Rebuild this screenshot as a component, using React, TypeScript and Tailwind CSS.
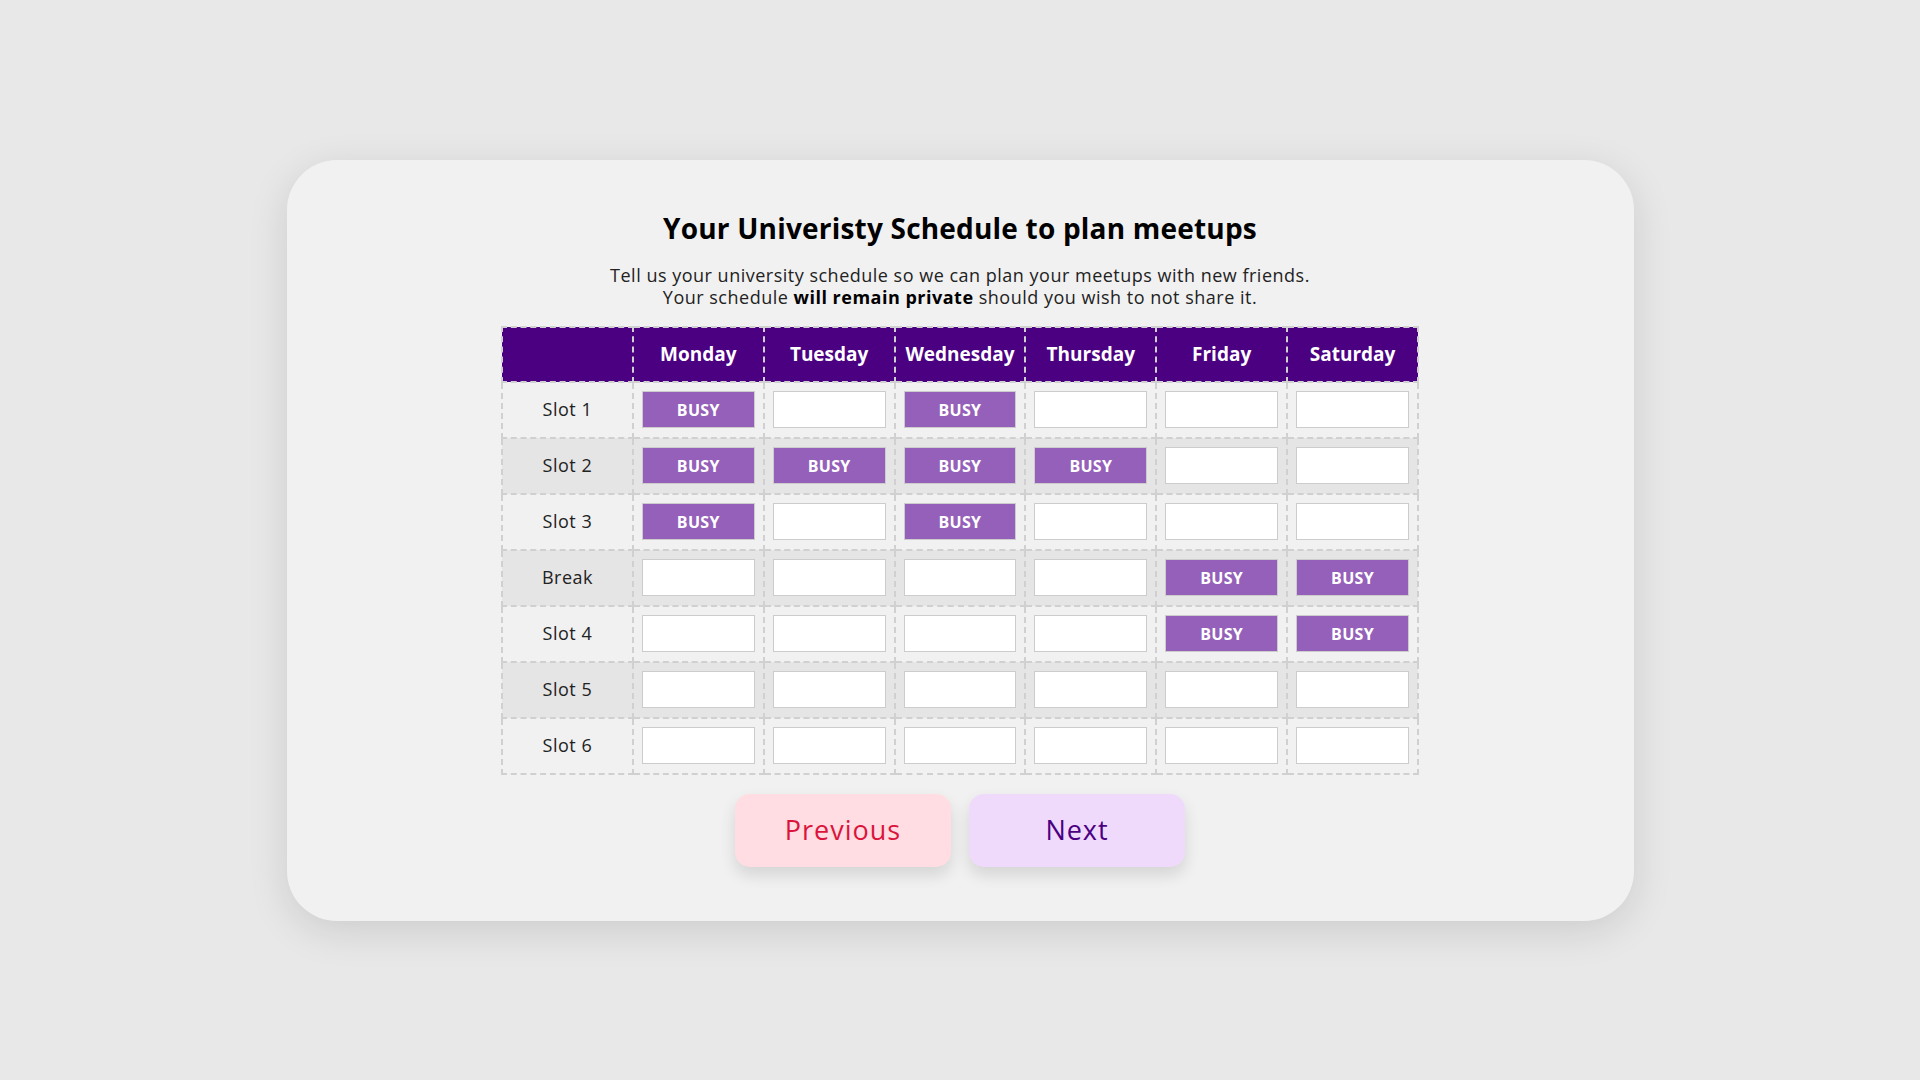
import React from 'react';

const days = ['Monday', 'Tuesday', 'Wednesday', 'Thursday', 'Friday', 'Saturday'];

const rows: { label: string; busy: boolean[] }[] = [
  { label: 'Slot 1', busy: [true, false, true, false, false, false] },
  { label: 'Slot 2', busy: [true, true, true, true, false, false] },
  { label: 'Slot 3', busy: [true, false, true, false, false, false] },
  { label: 'Break', busy: [false, false, false, false, true, true] },
  { label: 'Slot 4', busy: [false, false, false, false, true, true] },
  { label: 'Slot 5', busy: [false, false, false, false, false, false] },
  { label: 'Slot 6', busy: [false, false, false, false, false, false] },
];

function SlotBox({ busy }: { busy: boolean }) {
  return (
    <div
      className={`h-[37px] w-full border border-[#cccccc] flex items-center justify-center text-[16px] tracking-[0.3px] font-bold ${
        busy ? 'bg-[#9560b9] text-white' : 'bg-white'
      }`}
    >
      {busy ? 'BUSY' : ''}
    </div>
  );
}

export default function App() {
  return (
    <div className="min-h-screen w-full bg-[#e8e8e8] flex items-center justify-center font-['Open_Sans',sans-serif]">
      <div className="w-[1347px] rounded-[50px] bg-[#f1f1f1] shadow-[0_10px_40px_rgba(0,0,0,0.12)] pt-[51px] pb-[54px] flex flex-col items-center">
        <h1 className="text-[28px] leading-[34px] tracking-[0.2px] font-bold text-black">
          Your Univeristy Schedule to plan meetups
        </h1>
        <p className="mt-[19px] text-[18px] leading-[22px] tracking-[0.5px] text-[#222] text-center">
          Tell us your university schedule so we can plan your meetups with new friends.
          <br />
          Your schedule <span className="font-bold text-black">will remain private</span> should you wish to not share it.
        </p>

        <table className="mt-[18px] table-fixed w-[918px] border-collapse border-2 border-dashed border-[#d0d0d0]">
          <thead>
            <tr className="bg-[#4b0082] h-[55px]">
              <th className="border-2 border-dashed border-[#d0d0d0]" />
              {days.map((d) => (
                <th
                  key={d}
                  className="border-2 border-dashed border-[#d0d0d0] text-white text-[19px] font-bold"
                >
                  {d}
                </th>
              ))}
            </tr>
          </thead>
          <tbody>
            {rows.map((r, i) => (
              <tr key={r.label} className={`h-[56px] ${i % 2 === 1 ? 'bg-[#e5e5e5]' : 'bg-[#f1f1f1]'}`}>
                <td className="border-2 border-dashed border-[#d0d0d0] text-center text-[18px] tracking-[0.5px] text-[#222]">
                  {r.label}
                </td>
                {r.busy.map((b, j) => (
                  <td key={j} className="border-2 border-dashed border-[#d0d0d0] px-[8px] py-0">
                    <SlotBox busy={b} />
                  </td>
                ))}
              </tr>
            ))}
          </tbody>
        </table>

        <div className="mt-[19px] flex gap-[18px]">
          <button className="w-[216px] h-[73px] rounded-[15px] bg-[#ffdde3] text-[#dc143c] text-[27px] tracking-[1px] shadow-[0_8px_16px_rgba(0,0,0,0.12)]">
            Previous
          </button>
          <button className="w-[216px] h-[73px] rounded-[15px] bg-[#f0dafc] text-[#4b0082] text-[27px] tracking-[1px] shadow-[0_8px_16px_rgba(0,0,0,0.12)]">
            Next
          </button>
        </div>
      </div>
    </div>
  );
}
